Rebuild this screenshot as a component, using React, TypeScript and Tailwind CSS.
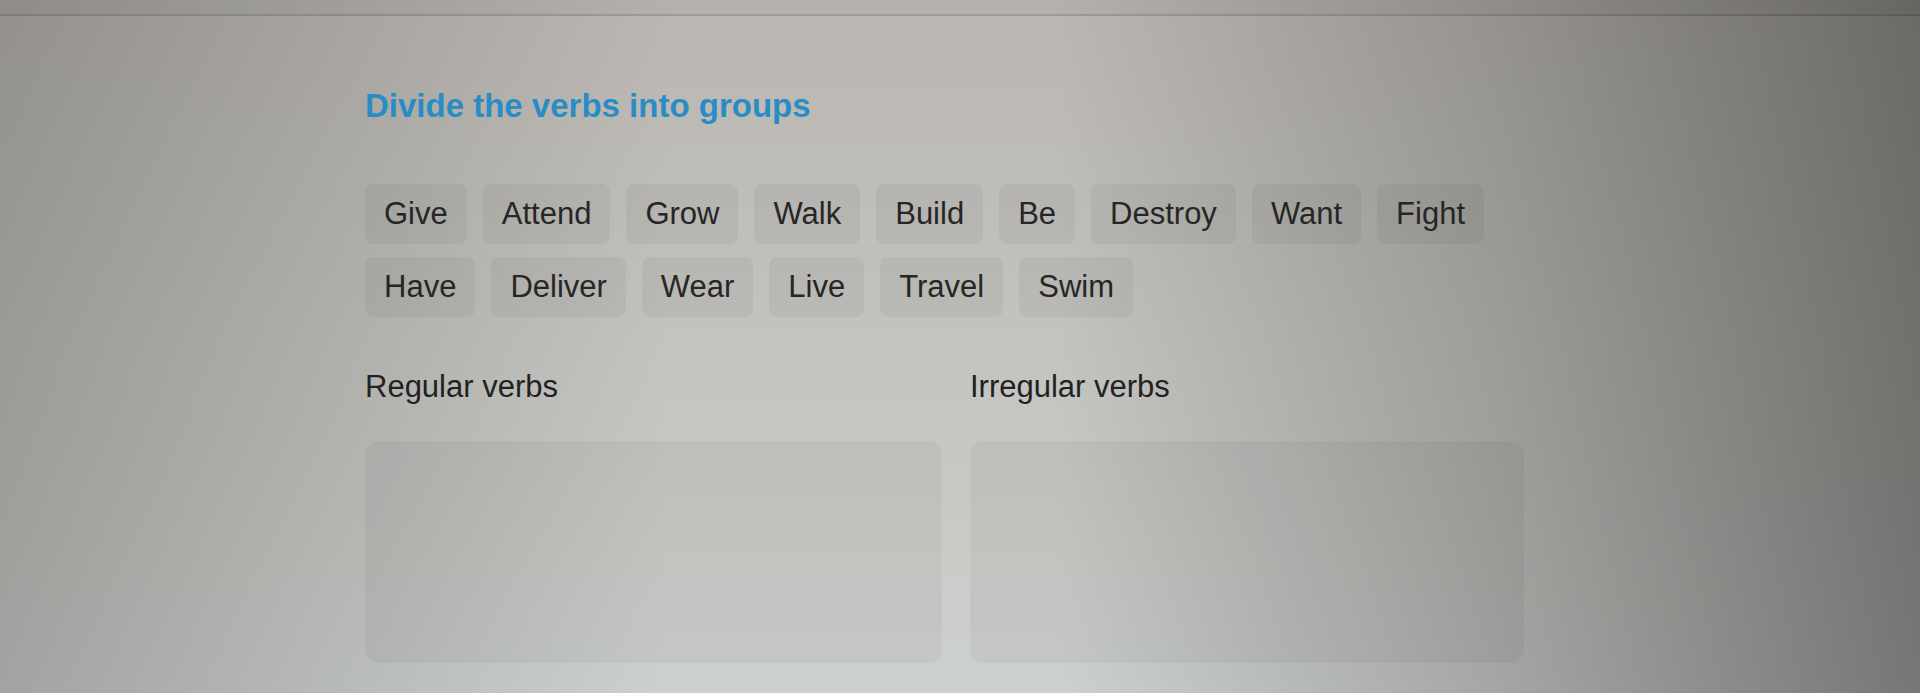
import React from "react";

const rowOne = ["Give", "Attend", "Grow", "Walk", "Build", "Be", "Destroy", "Want", "Fight"];
const rowTwo = ["Have", "Deliver", "Wear", "Live", "Travel", "Swim"];

function Chip({ word }: { word: string }) {
  return (
    <div className="cursor-grab select-none rounded-[8px] bg-[rgba(0,0,0,0.045)] px-[19px] py-3 text-[31px] leading-[36px] text-[#262626]">
      {word}
    </div>
  );
}

function DropZone({ title }: { title: string }) {
  return (
    <div className="flex flex-col">
      <div className="text-[31px] leading-[38px] text-[#222222]">{title}</div>
      <div className="mt-[35px] h-[222px] rounded-[14px] bg-[rgba(0,0,0,0.04)]" />
    </div>
  );
}

export default function App() {
  return (
    <div
      className="min-h-[693px] w-full overflow-hidden bg-[linear-gradient(to_right,rgba(60,60,58,0.3)_0%,rgba(0,0,0,0)_35%,rgba(0,0,0,0)_55%,rgba(40,40,38,0.25)_78%,rgba(30,30,28,0.5)_100%),linear-gradient(to_bottom,#bab6b1_0%,#c3c3bf_50%,#cdd1cd_100%)]"
      style={{ fontFamily: '"Liberation Sans", Arial, sans-serif' }}
    >
      {/* top browser edge */}
      <div className="h-[16px] border-b-2 border-[rgba(0,0,0,0.12)] bg-[rgba(0,0,0,0.03)]" />

      <div className="ml-[365px] w-[1160px] pt-[70px]">
        <h1 className="text-[33px] font-bold leading-[40px] text-[#2a8cc4]">
          Divide the verbs into groups
        </h1>

        <div className="mt-[58px] flex flex-col gap-y-[13px]">
          <div className="flex gap-x-4">
            {rowOne.map((w) => (
              <Chip key={w} word={w} />
            ))}
          </div>
          <div className="flex gap-x-4">
            {rowTwo.map((w) => (
              <Chip key={w} word={w} />
            ))}
          </div>
        </div>

        <div className="mt-[51px] grid grid-cols-[577px_554px] gap-x-[28px]">
          <DropZone title="Regular verbs" />
          <DropZone title="Irregular verbs" />
        </div>
      </div>
    </div>
  );
}
